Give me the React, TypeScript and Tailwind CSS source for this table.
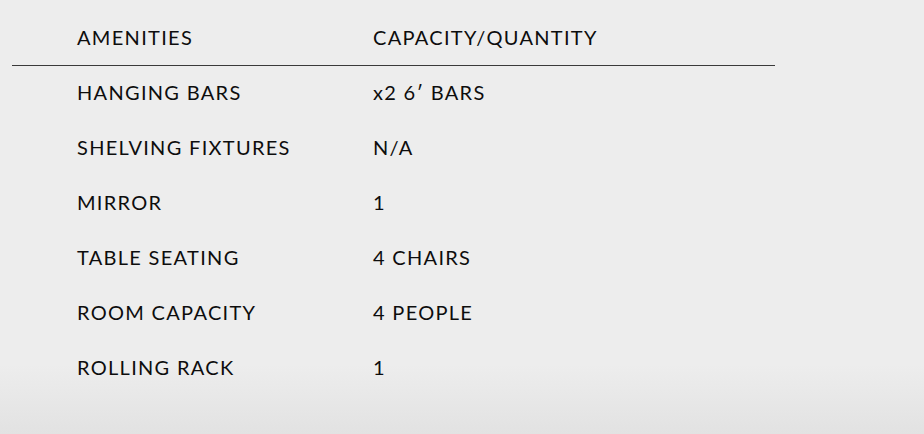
import React from "react";

const rows: [string, string][] = [
  ["HANGING BARS", "x2 6\u2032 BARS"],
  ["SHELVING FIXTURES", "N/A"],
  ["MIRROR", "1"],
  ["TABLE SEATING", "4 CHAIRS"],
  ["ROOM CAPACITY", "4 PEOPLE"],
  ["ROLLING RACK", "1"],
];

export default function App() {
  return (
    <div
      className="w-[924px] h-[434px] bg-[linear-gradient(to_bottom,#ededed_84%,#e2e2e2)] text-[#0d0d0d] pt-[11px] pl-[12px]"
      style={{ fontFamily: "Lato, 'Noto Sans', sans-serif" }}
    >
      <div className="w-[763px]">
        <div className="flex h-[54px] items-center pb-[2px] pl-[65px] text-[20px] tracking-[1.3px]">
          <div className="w-[296px]">AMENITIES</div>
          <div>CAPACITY/QUANTITY</div>
        </div>
        <div className="h-px bg-[#3a3a3a]" />
        {rows.map(([a, b]) => (
          <div key={a} className="flex h-[55px] items-center pb-[4px] pl-[65px] text-[20px] tracking-[1.3px]">
            <div className="w-[296px]">{a}</div>
            <div>{b}</div>
          </div>
        ))}
      </div>
    </div>
  );
}
